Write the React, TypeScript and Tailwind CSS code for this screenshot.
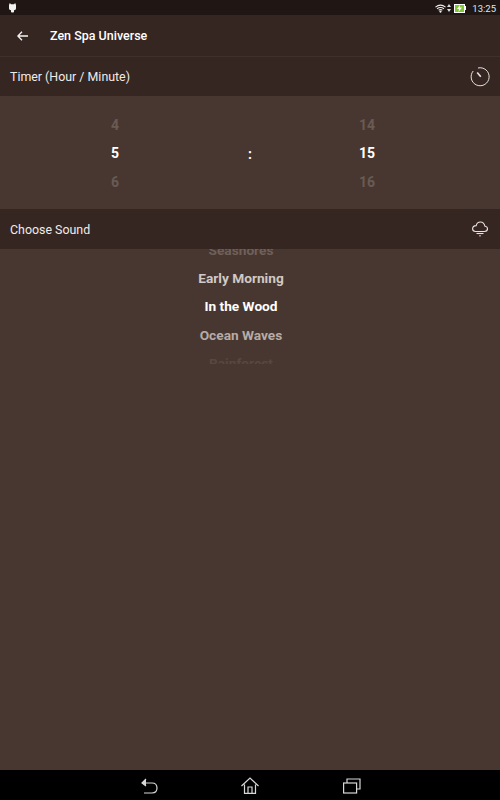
const font = { fontFamily: "Roboto, sans-serif" };

function Row({ children, className }: { children: React.ReactNode; className: string }) {
  return <div className={`h-[28.3px] flex items-center justify-center leading-none font-bold ${className}`}>{children}</div>;
}

function SectionHeader({ title, height, children }: { title: string; height: string; children: React.ReactNode }) {
  return (
    <div className={`${height} shrink-0 bg-[#352622] flex items-center justify-between pl-2.5 pr-2.5 text-[12.4px] text-[#f0ebe9]`}>
      <span className="pt-[2px]">{title}</span>
      {children}
    </div>
  );
}

export default function App() {
  return (
    <div className="w-[500px] h-[800px] flex flex-col bg-[#483730] overflow-hidden" style={font}>
      {/* status bar */}
      <div className="h-[15px] shrink-0 bg-[#201715] flex items-center justify-between pl-[9px] pr-[4px] pt-[1px] text-white">
        <svg width="7" height="10" viewBox="0 0 7 10" fill="#f2f2f2">
          <path d="M.8 0 L2 1.3 H5 L6.2 0 L7 2 V5.5 Q7 7 5 7.2 V9 Q3.5 10 2 9 V7.2 Q0 7 0 5.5 V2 Z" />
        </svg>
        <div className="flex items-center">
          <svg width="11" height="9" viewBox="0 0 12 9" fill="none" stroke="#eee" strokeWidth="1.1">
            <path d="M.5 3 Q6 -1.4 11.5 3 M2.2 4.8 Q6 2 9.8 4.8 M4 6.4 Q6 5 8 6.4" />
            <circle cx="6" cy="7.8" r=".7" fill="#eee" />
          </svg>
          <svg className="ml-[1px]" width="4" height="9" viewBox="0 0 4 9" fill="#ddd">
            <path d="M2 0 L4 3 H0 Z M0 5 H4 L2 8 Z" />
          </svg>
          <div className="ml-[3px] w-[11px] h-[9px] bg-[#7fc62f] border border-white flex items-center justify-center">
            <svg width="5" height="7" viewBox="0 0 5 7" fill="#fff"><path d="M3 0 L0 4 H2 L1.5 7 L5 2.6 H3 Z" /></svg>
          </div>
          <div className="w-[1px] h-[4px] bg-white" />
          <span className="ml-[6px] pt-[1px] text-[9.5px] leading-none text-[#e6e6e6]">13:25</span>
        </div>
      </div>

      {/* app bar */}
      <div className="h-[41px] shrink-0 bg-[#352622] flex items-center pl-[17px] text-white">
        <svg width="11" height="10" viewBox="0 0 11 10" fill="none" stroke="#f5f2f1" strokeWidth="1.3">
          <path d="M11 5 H1 M5 .7 L.9 5 L5 9.3" />
        </svg>
        <span className="ml-[22px] pt-[2px] text-[12.5px] font-medium">Zen Spa Universe</span>
      </div>
      <div className="h-[1px] shrink-0 bg-[#40302b]" />

      <SectionHeader title="Timer (Hour / Minute)" height="h-[39px]">
        <svg width="20" height="20" viewBox="0 0 20 20" fill="none" stroke="#e8e4e2" strokeWidth="1">
          <path d="M8 1 A9 9 0 1 1 3.2 4" />
          <path d="M7.2 5.5 L10.8 9.8" strokeWidth="1.6" />
        </svg>
      </SectionHeader>

      {/* time picker */}
      <div className="h-[113px] shrink-0 flex items-center pt-[2px] text-sm">
        <div className="w-[230px] flex flex-col">
          <Row className="text-[#6a5a54]">4</Row>
          <Row className="text-white">5</Row>
          <Row className="text-[#6a5a54]">6</Row>
        </div>
        <div className="w-[40px] text-center font-bold text-white">:</div>
        <div className="w-[194px] flex flex-col">
          <Row className="text-[#6a5a54]">14</Row>
          <Row className="text-white">15</Row>
          <Row className="text-[#6a5a54]">16</Row>
        </div>
      </div>

      <SectionHeader title="Choose Sound" height="h-10">
        <svg className="mr-[2px]" width="16" height="16" viewBox="0 0 16 16" fill="none" stroke="#e8e4e2" strokeWidth="1.1">
          <path d="M3.5 10.5 H12.5 Q15.5 10.5 15.5 7.8 Q15.5 5.4 13 5.3 Q12 1 8.4 1 Q5 1 4.2 4.6 Q.6 4.8 .6 7.8 Q.6 10.5 3.5 10.5 Z" />
          <path d="M4.5 12.5 H11.5" />
          <path d="M8 14 V15.5" />
        </svg>
      </SectionHeader>

      {/* sound picker */}
      <div className="h-[115px] shrink-0 w-[482px] overflow-hidden text-[13.7px]">
        <div className="flex flex-col -mt-[12.5px]">
          <Row className="text-[#6f605a]">Seashores</Row>
          <Row className="text-[#d0c9c6]">Early Morning</Row>
          <Row className="text-white">In the Wood</Row>
          <Row className="text-[#b5aca7]">Ocean Waves</Row>
          <Row className="text-[#574740]">Rainforest</Row>
        </div>
      </div>

      <div className="flex-1" />

      {/* nav bar */}
      <div className="h-[30px] shrink-0 bg-black flex items-center pt-[1px]">
        <svg className="ml-[141px]" width="17" height="16" viewBox="0 0 17 16" fill="none" stroke="#d8d8d8" strokeWidth="1.2">
          <path d="M1 5 H11 Q16 5 16 10 Q16 15 11 15 H3" />
          <path d="M5 1 L1 5 L5 8" fill="#d8d8d8" />
        </svg>
        <svg className="ml-[83px]" width="18" height="17" viewBox="0 0 18 17" fill="none" stroke="#d8d8d8" strokeWidth="1.2">
          <path d="M.5 9 L9 1 L17.5 9 M3.5 7.5 V16.4 H14.5 V7.5 M7 16 V10 H11 V16" />
        </svg>
        <svg className="ml-[84px]" width="18" height="16" viewBox="0 0 18 16" fill="none" stroke="#d8d8d8" strokeWidth="1.2">
          <rect x=".6" y="5" width="13" height="10" />
          <path d="M4 5 V1 H17 V11 H14" />
        </svg>
      </div>
    </div>
  );
}
